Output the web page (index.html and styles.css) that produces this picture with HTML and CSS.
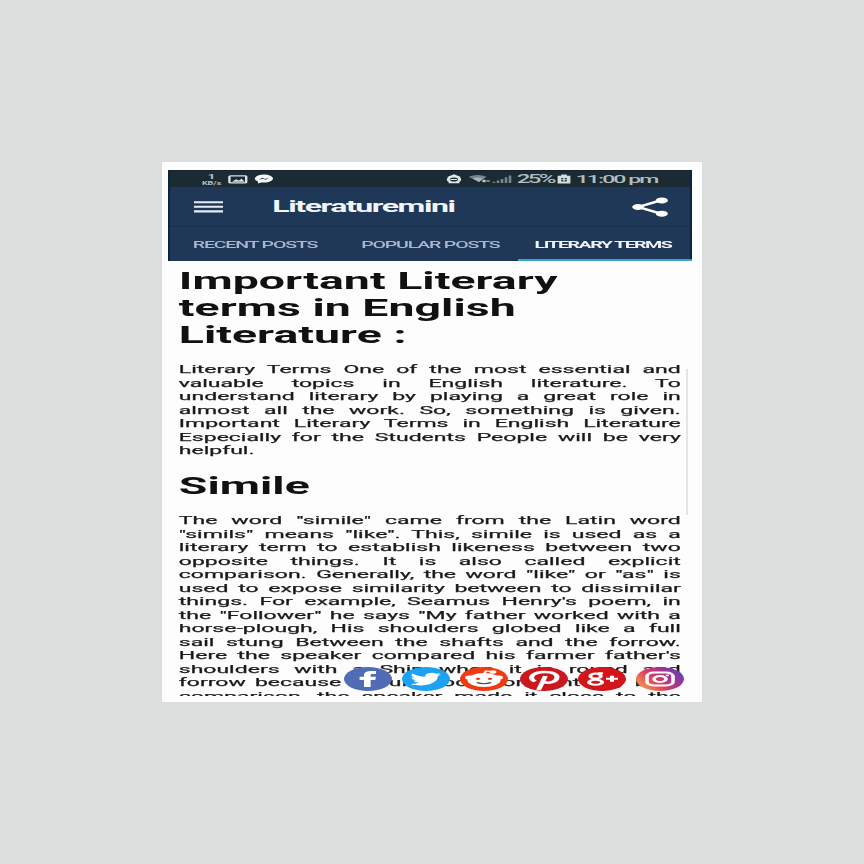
FILE: index.html
```
<!DOCTYPE html>
<html lang="en">
<head>
<meta charset="utf-8">
<title>Literaturemini</title>
<link rel="stylesheet" href="styles.css">
</head>
<body>
<main class="frame">
  <div class="screen">
    <header class="top">
      <div class="status">
        <div class="status-left">
          <span class="speed"><b>1</b><small>KB/s</small></span>
          <svg class="pic" viewBox="0 0 10 9"><rect x=".7" y=".9" width="8.4" height="7" rx=".7" fill="none" stroke="#dce3e5" stroke-width="1.2"/><path d="M2 6.8 4 4.3l1.4 1.2L6.8 3.7 8.3 6.8z" fill="#dce3e5"/></svg>
          <svg class="chat" viewBox="0 0 10 10"><path d="M5 .6a4.5 4 0 0 0-3 7v1.8l1.600-1A4.500 4 0 1 0 5 .6z" fill="#f3f6f6"/><path d="m2.400 5.800 1.800-2L5.500 5l2.100-1.200-1.800 2L4.500 4.700z" fill="#1b2b33"/></svg>
        </div>
        <div class="status-right">
          <svg class="alarm" viewBox="0 0 8 10"><circle cx="4" cy="5.400" r="2.800" fill="none" stroke="#e2e7e8" stroke-width="1.600"/><path d="M1 3.400 4 1l3 2.400M2.300 5.500h3.200M1.300 8.700h5.400" fill="none" stroke="#e2e7e8" stroke-width="1.200"/></svg>
          <svg class="wifi" viewBox="0 0 12 10"><path d="M.3 2.800Q4.800-.7 9.300 2.800L5.500 8z" fill="#78868b"/><path d="M2.300 4.400Q5 2.600 7.500 4.500L5.500 8z" fill="#aab3b6"/><path d="M7 7h4M8 5.800v2.400" stroke="#c6ced0" stroke-width="1.100"/></svg>
          <svg class="signal" viewBox="0 0 10 10"><path d="M1 9V7.700M3 9V6.500M5 9V5M7 9V3.300M9 9V1.500" stroke="#77868b" stroke-width="1.300"/></svg>
          <span class="battery-text">25%</span>
          <svg class="battery" viewBox="0 0 8 10"><path d="M2.600.5h2.800v1.300h1.800v7.600H.8V1.800h1.800z" fill="#d5dddf"/><path d="M2.600 4h2.800v3.400H2.600z" fill="#24353b"/><path d="M4 3.300v4M2.700 5.600h2.600" stroke="#d5dddf" stroke-width=".7"/></svg>
          <span class="clock">11:00 pm</span>
        </div>
      </div>
      <div class="appbar">
        <svg class="menu" viewBox="0 0 15 12"><path d="M0 1.200h14.500M0 5.800h14.500M0 10.400h14.500" stroke="#e7edf4" stroke-width="2.100"/></svg>
        <h1>Literaturemini</h1>
        <svg class="share" viewBox="0 0 18 20"><path d="M15 3 3 10l12 7" fill="none" stroke="#fff" stroke-width="2.100"/><circle cx="14.900" cy="3.400" r="3" fill="#fff"/><circle cx="3" cy="10" r="2.900" fill="#fff"/><circle cx="14.900" cy="16.700" r="3" fill="#fff"/></svg>
      </div>
      <nav class="tabs">
        <span class="tab recent">RECENT POSTS</span>
        <span class="tab popular">POPULAR POSTS</span>
        <span class="tab active">LITERARY TERMS</span>
      </nav>
    </header>
    <article class="article">
      <h2>Important Literary<br>terms in English<br>Literature :</h2>
      <p>
        <span>Literary Terms One of the most essential and</span>
        <span>valuable topics in English literature. To</span>
        <span>understand literary by playing a great role in</span>
        <span>almost all the work. So, something is given.</span>
        <span>Important Literary Terms in English Literature</span>
        <span>Especially for the Students People will be very</span>
        <span class="end">helpful.</span>
      </p>
      <h3>Simile</h3>
      <p>
        <span>The word "simile" came from the Latin word</span>
        <span>"simils" means "like". This, simile is used as a</span>
        <span>literary term to establish likeness between two</span>
        <span>opposite things. It is also called explicit</span>
        <span>comparison. Generally, the word "like" or "as" is</span>
        <span>used to expose similarity between to dissimilar</span>
        <span>things. For example, Seamus Henry's poem, in</span>
        <span>the "Follower" he says "My father worked with a</span>
        <span>horse-plough, His shoulders globed like a full</span>
        <span>sail stung Between the shafts and the forrow.</span>
        <span>Here the speaker compared his farmer father's</span>
        <span>shoulders with a Ship when it is round and</span>
        <span>forrow because of full moon constant any by it</span>
        <span>comparison, the speaker made it close to the</span>
      </p>
    </article>
    <div class="scrollbar"></div>
    <div class="social">
      <svg viewBox="0 0 24 24"><circle cx="12" cy="12" r="12" fill="#506cb6"/><path d="M10 20v-7H7.800V9.800H10V8c0-2.700 1.400-4.100 4-4.100h2v3.200h-1.400c-1 0-1.300.4-1.300 1.300v1.400H16l-.4 3.200h-2.300v7z" fill="#fff"/></svg>
      <svg viewBox="0 0 24 24"><circle cx="12" cy="12" r="12" fill="#1da1f2"/><path d="M19.500 7.300c-.6.3-1.100.4-1.800.5.7-.4 1.100-1 1.300-1.700-.6.4-1.200.6-1.900.7a3.200 3.200 0 0 0-5.400 2.900A9 9 0 0 1 5.200 6.400a3.200 3.200 0 0 0 1 4.200c-.5 0-1-.1-1.500-.4 0 1.600 1.100 2.800 2.600 3.100-.5.2-1 .2-1.500.1.400 1.300 1.600 2.200 3 2.200A6.400 6.400 0 0 1 4.200 17c5.900 3.600 13.900.2 13.700-8 .6-.4 1.200-1 1.600-1.700z" fill="#fff"/></svg>
      <svg viewBox="0 0 24 24"><circle cx="12" cy="12" r="12" fill="#f03a12"/><ellipse cx="12" cy="13" rx="8.300" ry="7" fill="#fff"/><circle cx="4.500" cy="10.500" r="2" fill="#fff"/><circle cx="19.500" cy="10.500" r="2" fill="#fff"/><path d="m12 7 1-3 3.500.8" fill="none" stroke="#fff" stroke-width="1.200"/><circle cx="16.500" cy="5" r="1.700" fill="#fff"/><circle cx="9" cy="11.800" r="1.100" fill="#e63412"/><circle cx="15" cy="11.800" r="1.100" fill="#e63412"/><path d="M8.500 15.500q3.500 2.500 7 0" fill="none" stroke="#443" stroke-width="1.100"/></svg>
      <svg viewBox="0 0 24 24"><circle cx="12" cy="12" r="12" fill="#cb171e"/><path d="M7.500 14.500C3.800 10.500 6.500 5 12.300 5c4.200 0 6.500 2.400 6.200 5.600-.4 4-3.900 6.400-6.700 4.200M12.700 9 9.300 23" fill="none" stroke="#fff" stroke-width="2.500"/></svg>
      <svg viewBox="0 0 24 24"><circle cx="12" cy="12" r="12" fill="#d3161c"/><g fill="none" stroke="#fff" stroke-width="2"><circle cx="8.800" cy="9" r="2.600"/><ellipse cx="8.800" cy="15.200" rx="3.300" ry="2.500"/><path d="M10 6.300h2.500M14 11.700h6M17 8.700v6"/></g></svg>
      <svg viewBox="0 0 24 24"><defs><linearGradient id="insta" x1="0" y1=".8" x2="1" y2=".2"><stop offset="0" stop-color="#f7a34b"/><stop offset=".4" stop-color="#dd405f"/><stop offset=".7" stop-color="#a33391"/><stop offset="1" stop-color="#5548bb"/></linearGradient></defs><circle cx="12" cy="12" r="12" fill="url(#insta)"/><rect x="5.500" y="5.500" width="13" height="13" rx="3.500" fill="none" stroke="#fff" stroke-width="1.800"/><circle cx="12" cy="12" r="3" fill="none" stroke="#fff" stroke-width="1.800"/><circle cx="15.700" cy="8.300" r=".9" fill="#fff"/></svg>
    </div>
  </div>
</main>
</body>
</html>
```
FILE: styles.css
```
* { box-sizing: border-box; }
body {
  margin: 0;
  height: 864px;
  padding: 162px;
  background: #dbdedd;
  font-family: Roboto, "Liberation Sans", sans-serif;
  overflow: hidden;
}
.frame { width: 540px; height: 540px; background: #fdfdfd; overflow: hidden; }
/* The screen is laid out at half width and stretched horizontally. */
.screen {
  position: relative;
  width: 270px;
  height: 534px;
  padding: 8px 5.200px 0 2.800px;
  overflow: hidden;
  transform: scaleX(2);
  transform-origin: 0 0;
}
svg { display: block; flex: none; }
.top { height: 91px; background: #203857; border-left: .6px solid #0c2346; border-right: .6px solid #0c2346; }
.status {
  display: flex;
  justify-content: space-between;
  height: 17px;
  padding: 1px 16px 0 15.500px;
  background: #1b2b33;
  border-top: 1px solid #14242c;
  color: #b3bdc0;
}
.status-left, .status-right { display: flex; align-items: center; height: 14px; }
.speed { display: flex; flex-direction: column; align-items: center; width: 11px; font-size: 7px; line-height: 8px; }
.speed small { font-size: 4.500px; line-height: 5px; font-weight: 700; }
.pic { width: 10px; height: 9px; margin-left: 2.500px; }
.chat { width: 10px; height: 10px; margin-left: 3px; }
.alarm { width: 8px; height: 10px; }
.wifi { width: 12px; height: 10px; margin-left: 3.500px; }
.signal { width: 10px; height: 10px; }
.battery-text { width: 18.500px; margin-left: 2px; font-size: 12px; font-weight: 500; letter-spacing: -1.300px; }
.battery { width: 8px; height: 10px; margin-left: 1px; }
.clock { width: 41px; margin-left: 2px; font-size: 11.500px; font-weight: 500; letter-spacing: -.95px; white-space: nowrap; }
.appbar { display: flex; align-items: center; height: 40px; padding: 0 10.500px 0 12.200px; border-bottom: 1px solid #1a2e4c; }
.menu { width: 15px; height: 12px; }
.appbar h1 { margin: 1px auto 0 24.200px; color: #f1f5fa; font-size: 16px; line-height: 24px; font-weight: 700; letter-spacing: -.72px; }
.share { width: 18px; height: 20px; }
.tabs { display: flex; height: 34px; color: #a9b7ce; font-size: 9.800px; font-weight: 500; line-height: 35px; white-space: nowrap; }
.tab { flex: none; letter-spacing: -.6px; }
.recent { width: 83.500px; padding-left: 11.600px; }
.popular { width: 91px; padding-left: 12.300px; }
.active { width: 86.500px; padding-left: 8px; color: #eef3f9; font-weight: 700; letter-spacing: -.78px; border-bottom: 2.500px solid #36a5c7; }
.article { width: 251px; margin-left: 5.600px; color: #171717; }
h2, h3 { color: #111; font-size: 23.200px; line-height: 27px; font-weight: 700; letter-spacing: .03px; white-space: nowrap; }
h2 { margin: 7px 0 14px; }
h3 { margin: 15px 0 14.500px; }
p { margin: 0; font-size: 11.500px; line-height: 13.500px; letter-spacing: 0; -webkit-text-stroke: .25px #222; }
p span { display: block; white-space: nowrap; text-align: justify; text-align-last: justify; }
p .end { text-align-last: left; }
.scrollbar { position: absolute; left: 262px; top: 207px; width: 1px; height: 146px; background: #e5e5e5; }
.social { position: absolute; left: 91px; top: 505px; display: flex; gap: 5.200px; }
.social svg { width: 24px; height: 24px; }
```
